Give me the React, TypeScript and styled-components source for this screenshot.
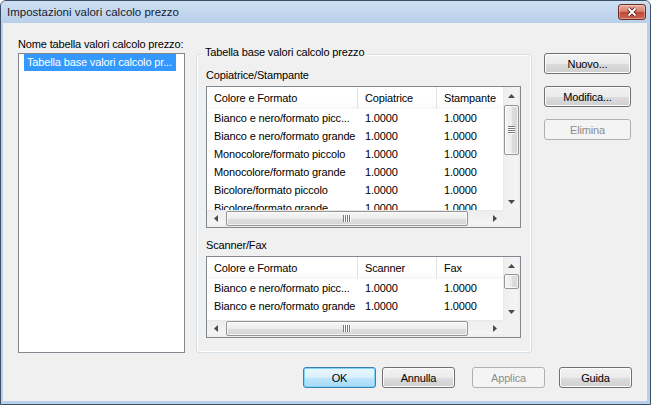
import React from 'react';
import styled, { createGlobalStyle, css } from 'styled-components';

const GlobalStyle = createGlobalStyle`
    html, body {
        margin: 0;
        padding: 0;
        background: #ffffff;
    }
    body {
        font-family: "Liberation Sans", Arial, sans-serif;
        font-size: 11px;
        letter-spacing: -0.15px;
        color: #000;
    }
    * {
        box-sizing: border-box;
    }
`;

const Window = styled.div`
    width: 651px;
    height: 405px;
    display: flex;
    flex-direction: column;
    border: 1px solid #3d4f66;
    border-radius: 6px 6px 0 0;
    background: #b9d0ea;
    overflow: hidden;
`;

const TitleBar = styled.div`
    flex: none;
    height: 22px;
    display: flex;
    align-items: center;
    justify-content: space-between;
    padding: 0 4px 0 6px;
    background: linear-gradient(#cddff2, #b9d0ea);
`;

const TitleText = styled.span`
    font-family: "Liberation Sans Narrow", "Liberation Sans", sans-serif;
    font-size: 11.5px;
    letter-spacing: 0;
    color: #1a1a2e;
`;

const CloseButton = styled.div`
    width: 28px;
    height: 16px;
    display: flex;
    align-items: center;
    justify-content: center;
    border: 1px solid #6b2c26;
    border-radius: 3px;
    background: linear-gradient(#e9ad9f 0%, #d88271 45%, #c4493a 52%, #cc6452 100%);
    box-shadow: inset 0 0 0 1px rgba(255, 255, 255, 0.35);
`;

const Client = styled.div`
    flex: 1;
    margin: 0 3px 3px 2px;
    padding: 15px 15px 0 15px;
    display: flex;
    flex-direction: column;
    background: #f0f0f0;
`;

const MainRow = styled.div`
    display: flex;
    align-items: flex-start;
`;

const LeftColumn = styled.div`
    width: 167px;
    display: flex;
    flex-direction: column;
`;

const Label = styled.div<{ $top?: number }>`
    line-height: 13px;
    height: 13px;
    margin-top: ${(p) => p.$top ?? 0}px;
    white-space: nowrap;
`;

const NameList = styled.div`
    margin-top: 2px;
    height: 300px;
    border: 1px solid #828790;
    background: #ffffff;
`;

const NameItem = styled.div`
    margin-left: 5px;
    width: 152px;
    height: 17px;
    line-height: 17px;
    padding-left: 3px;
    background: #3399ff;
    color: #ffffff;
    white-space: nowrap;
    overflow: hidden;
`;

const GroupBox = styled.div`
    position: relative;
    margin: 16px 0 0 11px;
    width: 336px;
    height: 299px;
    padding: 14px 10px 14px 9px;
    border: 1px solid #d5dfe5;
    border-radius: 3px;
    box-shadow: inset 0 0 0 1px #ffffff;
`;

const GroupLegend = styled.span`
    position: absolute;
    top: -9px;
    left: 5px;
    padding: 0 3px;
    line-height: 13px;
    background: #f0f0f0;
    white-space: nowrap;
`;

const ListFrame = styled.div<{ $height: number; $top: number }>`
    margin-top: ${(p) => p.$top}px;
    height: ${(p) => p.$height}px;
    border: 1px solid #828790;
    background: #ffffff;
    display: grid;
    grid-template-columns: 1fr 17px;
    grid-template-rows: 1fr 17px;
`;

const ListBody = styled.div`
    overflow: hidden;
    min-width: 0;
    min-height: 0;
`;

const HeaderRow = styled.div`
    display: flex;
    height: 22px;
    background: linear-gradient(#ffffff 0%, #ffffff 70%, #f6f7f8 100%);
`;

const HeaderCell = styled.div<{ $width: number }>`
    flex: none;
    width: ${(p) => p.$width}px;
    padding-left: 7px;
    line-height: 22px;
    border-right: 1px solid #e3e3e3;
    white-space: nowrap;
    overflow: hidden;
`;

const DataRow = styled.div`
    display: flex;
    height: 18px;
`;

const DataCell = styled.div<{ $width: number }>`
    flex: none;
    width: ${(p) => p.$width}px;
    padding-left: 7px;
    line-height: 18px;
    white-space: nowrap;
    overflow: hidden;
`;

const VScroll = styled.div`
    display: flex;
    flex-direction: column;
    background: linear-gradient(to right, #e3e3e3 0, #eeeeee 1px, #f4f4f4 80%, #ececec 100%);
`;

const HScroll = styled.div`
    display: flex;
    background: linear-gradient(#e3e3e3 0, #eeeeee 1px, #f4f4f4 80%, #ececec 100%);
`;

const Corner = styled.div`
    background: #f0f0f0;
`;

const ArrowButton = styled.div`
    flex: none;
    width: 17px;
    height: 17px;
    display: flex;
    align-items: center;
    justify-content: center;
`;

const VTrack = styled.div`
    flex: 1;
    display: flex;
    flex-direction: column;
`;

const HTrack = styled.div`
    flex: 1;
    display: flex;
`;

const thumbLook = css`
    border: 1px solid #959595;
    border-radius: 2px;
    box-shadow: inset 0 0 0 1px rgba(255, 255, 255, 0.7);
    display: flex;
    align-items: center;
    justify-content: center;
`;

const VThumb = styled.div<{ $offset: number; $size: number }>`
    ${thumbLook};
    margin: ${(p) => p.$offset}px 1px 0 1px;
    height: ${(p) => p.$size}px;
    background: linear-gradient(to right, #f6f6f6 0%, #ececec 50%, #dedede 51%, #d6d6d6 100%);
`;

const HThumb = styled.div<{ $offset: number; $size: number }>`
    ${thumbLook};
    margin: 1px 0 1px ${(p) => p.$offset}px;
    width: ${(p) => p.$size}px;
    background: linear-gradient(#f6f6f6 0%, #ececec 50%, #dedede 51%, #d6d6d6 100%);
`;

const RightColumn = styled.div`
    margin: 15px 0 0 12px;
    width: 87px;
    display: flex;
    flex-direction: column;
    gap: 12px;
`;

const BottomRow = styled.div`
    margin-top: 14px;
    display: flex;
    justify-content: flex-end;
`;

const Button = styled.button<{ $width: number; $gap?: number; $default?: boolean }>`
    width: ${(p) => p.$width}px;
    height: 21px;
    margin: 0 0 0 ${(p) => p.$gap ?? 0}px;
    padding: 0;
    font-family: "Liberation Sans", Arial, sans-serif;
    font-size: 11px;
    letter-spacing: -0.15px;
    color: #000000;
    border: 1px solid #707070;
    border-radius: 3px;
    background: linear-gradient(#f2f2f2 0%, #ebebeb 50%, #dddddd 51%, #cfcfcf 100%);
    box-shadow: inset 0 0 0 1px #fcfcfc;
    ${(p) =>
        p.$default &&
        css`
            border-color: #3c7fb1;
            background: linear-gradient(#eaf6fd 0%, #d9f0fc 50%, #bee6fd 51%, #a7d9f5 100%);
            box-shadow: inset 0 0 0 1px #7fd5f9;
        `}
    &:disabled {
        color: #8d8d8d;
        border-color: #adb2b5;
        background: #f4f4f4;
        box-shadow: none;
    }
`;

const ArrowIcon = ({ dir }: { dir: 'up' | 'down' | 'left' | 'right' }) => {
    const paths = {
        up: 'M0 4 L3.5 0 L7 4 Z',
        down: 'M0 0 L7 0 L3.5 4 Z',
        left: 'M4 0 L4 7 L0 3.5 Z',
        right: 'M0 0 L4 3.5 L0 7 Z',
    };
    const vertical = dir === 'up' || dir === 'down';
    return (
        <svg width={vertical ? 7 : 4} height={vertical ? 4 : 7} viewBox={vertical ? '0 0 7 4' : '0 0 4 7'}>
            <path d={paths[dir]} fill="#4a4a4a" />
        </svg>
    );
};

const Grip = ({ vertical }: { vertical: boolean }) => (
    <svg width={vertical ? 7 : 8} height={vertical ? 8 : 7}>
        {[0, 2, 4, 6].map((i) =>
            vertical ? (
                <g key={i}>
                    <rect x={0} y={i} width={7} height={1} fill="#7a7a7a" />
                    <rect x={0} y={i + 1} width={7} height={1} fill="#ffffff" />
                </g>
            ) : (
                <g key={i}>
                    <rect x={i} y={0} width={1} height={7} fill="#7a7a7a" />
                    <rect x={i + 1} y={0} width={1} height={7} fill="#ffffff" />
                </g>
            ),
        )}
    </svg>
);

interface IColumn {
    title: string;
    width: number;
}

interface IListViewProps {
    height: number;
    top: number;
    columns: IColumn[];
    rows: string[][];
    vThumb: { offset: number; size: number; grip: boolean };
    hThumb: { offset: number; size: number };
}

const ListView = ({ height, top, columns, rows, vThumb, hThumb }: IListViewProps): JSX.Element => (
    <ListFrame $height={height} $top={top}>
        <ListBody>
            <HeaderRow>
                {columns.map((c) => (
                    <HeaderCell key={c.title} $width={c.width}>
                        {c.title}
                    </HeaderCell>
                ))}
            </HeaderRow>
            {rows.map((r, i) => (
                <DataRow key={i}>
                    {r.map((v, j) => (
                        <DataCell key={j} $width={columns[j].width}>
                            {v}
                        </DataCell>
                    ))}
                </DataRow>
            ))}
        </ListBody>
        <VScroll>
            <ArrowButton>
                <ArrowIcon dir="up" />
            </ArrowButton>
            <VTrack>
                <VThumb $offset={vThumb.offset} $size={vThumb.size}>
                    {vThumb.grip && <Grip vertical />}
                </VThumb>
            </VTrack>
            <ArrowButton>
                <ArrowIcon dir="down" />
            </ArrowButton>
        </VScroll>
        <HScroll>
            <ArrowButton>
                <ArrowIcon dir="left" />
            </ArrowButton>
            <HTrack>
                <HThumb $offset={hThumb.offset} $size={hThumb.size}>
                    <Grip vertical={false} />
                </HThumb>
            </HTrack>
            <ArrowButton>
                <ArrowIcon dir="right" />
            </ArrowButton>
        </HScroll>
        <Corner />
    </ListFrame>
);

const copierColumns: IColumn[] = [
    { title: 'Colore e Formato', width: 151 },
    { title: 'Copiatrice', width: 79 },
    { title: 'Stampante', width: 80 },
];

const scannerColumns: IColumn[] = [
    { title: 'Colore e Formato', width: 151 },
    { title: 'Scanner', width: 79 },
    { title: 'Fax', width: 80 },
];

const copierRows = [
    ['Bianco e nero/formato picc...', '1.0000', '1.0000'],
    ['Bianco e nero/formato grande', '1.0000', '1.0000'],
    ['Monocolore/formato piccolo', '1.0000', '1.0000'],
    ['Monocolore/formato grande', '1.0000', '1.0000'],
    ['Bicolore/formato piccolo', '1.0000', '1.0000'],
    ['Bicolore/formato grande', '1.0000', '1.0000'],
    ['Colore/formato piccolo', '1.0000', '1.0000'],
];

const scannerRows = [
    ['Bianco e nero/formato picc...', '1.0000', '1.0000'],
    ['Bianco e nero/formato grande', '1.0000', '1.0000'],
    ['Colore/formato piccolo', '1.0000', '1.0000'],
];

const App = (): JSX.Element => {
    return (
        <>
            <GlobalStyle />
            <Window>
                <TitleBar>
                    <TitleText>Impostazioni valori calcolo prezzo</TitleText>
                    <CloseButton>
                        <svg width="12" height="10" viewBox="0 0 12 10">
                            <path d="M2.5 1.5 L9.5 8.5 M9.5 1.5 L2.5 8.5" stroke="#4f1c16" strokeWidth="3.8" />
                            <path d="M2.5 1.5 L9.5 8.5 M9.5 1.5 L2.5 8.5" stroke="#ffffff" strokeWidth="2" />
                        </svg>
                    </CloseButton>
                </TitleBar>
                <Client>
                    <MainRow>
                        <LeftColumn>
                            <Label>Nome tabella valori calcolo prezzo:</Label>
                            <NameList>
                                <NameItem>Tabella base valori calcolo pr...</NameItem>
                            </NameList>
                        </LeftColumn>
                        <GroupBox>
                            <GroupLegend>Tabella base valori calcolo prezzo</GroupLegend>
                            <Label>Copiatrice/Stampante</Label>
                            <ListView
                                height={142}
                                top={4}
                                columns={copierColumns}
                                rows={copierRows}
                                vThumb={{ offset: 1, size: 50, grip: true }}
                                hThumb={{ offset: 2, size: 242 }}
                            />
                            <Label $top={11}>Scanner/Fax</Label>
                            <ListView
                                height={82}
                                top={4}
                                columns={scannerColumns}
                                rows={scannerRows}
                                vThumb={{ offset: 0, size: 15, grip: false }}
                                hThumb={{ offset: 2, size: 242 }}
                            />
                        </GroupBox>
                        <RightColumn>
                            <Button $width={87}>Nuovo...</Button>
                            <Button $width={87}>Modifica...</Button>
                            <Button $width={87} disabled>
                                Elimina
                            </Button>
                        </RightColumn>
                    </MainRow>
                    <BottomRow>
                        <Button $width={73} $default>
                            OK
                        </Button>
                        <Button $width={73} $gap={6}>
                            Annulla
                        </Button>
                        <Button $width={73} $gap={17} disabled>
                            Applica
                        </Button>
                        <Button $width={73} $gap={14}>
                            Guida
                        </Button>
                    </BottomRow>
                </Client>
            </Window>
        </>
    );
};

export default App;
